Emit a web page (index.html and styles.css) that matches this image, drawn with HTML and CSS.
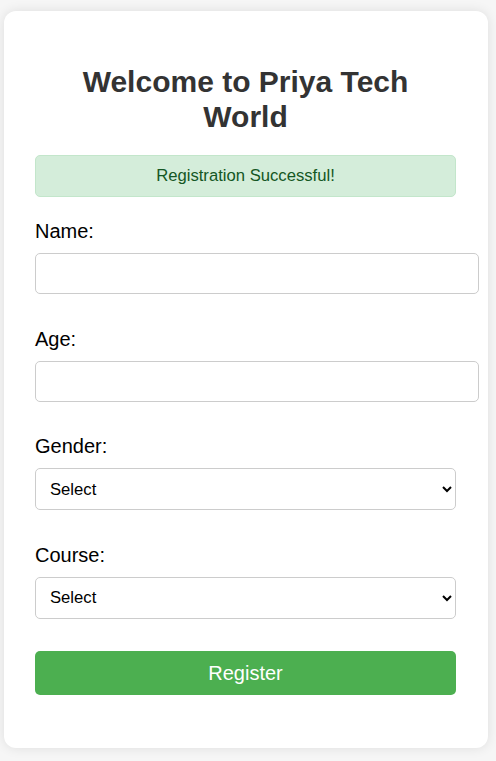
FILE: index.html
```html
<!DOCTYPE html>
<html lang="en">
<head>
<meta charset="utf-8">
<title>Priya Tech World</title>
<link rel="stylesheet" href="styles.css">
</head>
<body>
  <div class="card">
    <h2 class="title">Welcome to Priya Tech World</h2>
    <div class="success">Registration Successful!</div>
    <form class="form">
      <div class="group">
        <label class="label" for="name">Name:</label>
        <input class="input" id="name" type="text">
      </div>
      <div class="group">
        <label class="label" for="age">Age:</label>
        <input class="input" id="age" type="number">
      </div>
      <div class="group">
        <label class="label" for="gender">Gender:</label>
        <select class="select" id="gender">
          <option>Select</option>
          <option>Male</option>
          <option>Female</option>
        </select>
      </div>
      <div class="group">
        <label class="label" for="course">Course:</label>
        <select class="select" id="course">
          <option>Select</option>
          <option>Web Development</option>
          <option>Data Science</option>
        </select>
      </div>
      <button class="button" type="button">Register</button>
    </form>
  </div>
</body>
</html>
```

FILE: styles.css
```css
html, body {
  margin: 0;
  padding: 0;
}
body {
  background: #f6f6f6;
  font-family: "Liberation Sans", Arial, sans-serif;
  padding: 11px 0 13px 4px;
}
.card {
  width: 421px;
  padding: 31px 32px 31px 31px;
  background: #ffffff;
  border-radius: 12px;
  box-shadow: 0 0 12px rgba(0, 0, 0, 0.1);
}
.title {
  margin: 21.5px 0 20.5px;
  padding: 0 20px;
  font-size: 30px;
  line-height: 35.5px;
  font-weight: bold;
  text-align: center;
  color: #333333;
}
.success {
  box-sizing: border-box;
  height: 42px;
  padding: 10px;
  border: 1px solid #c3e6cb;
  border-radius: 5px;
  background: #d4edda;
  color: #155724;
  font-size: 16.67px;
  line-height: 20px;
  text-align: center;
}
.form {
  display: flex;
  flex-direction: column;
  margin-top: 23px;
}
.group {
  display: flex;
  flex-direction: column;
  align-items: flex-start;
  margin-bottom: 33.5px;
}
.label {
  font-size: 20px;
  line-height: 23px;
  color: #000000;
  margin-bottom: 10px;
}
.input {
  box-sizing: border-box;
  width: 444px;
  height: 41px;
  padding: 0 10px;
  border: 1px solid #cccccc;
  border-radius: 5px;
  font-family: "Liberation Sans", Arial, sans-serif;
  font-size: 16.67px;
  background: #ffffff;
}
.select {
  box-sizing: border-box;
  width: 421px;
  height: 42px;
  padding: 0 10px;
  border: 1px solid #cccccc;
  border-radius: 5px;
  font-family: "Liberation Sans", Arial, sans-serif;
  font-size: 16.67px;
  color: #000000;
  background: #ffffff;
}
.button {
  width: 421px;
  height: 44px;
  margin: -1px 0 22px;
  border: none;
  border-radius: 5px;
  background: #4caf50;
  color: #ffffff;
  font-family: "Liberation Sans", Arial, sans-serif;
  font-size: 20px;
}
```
